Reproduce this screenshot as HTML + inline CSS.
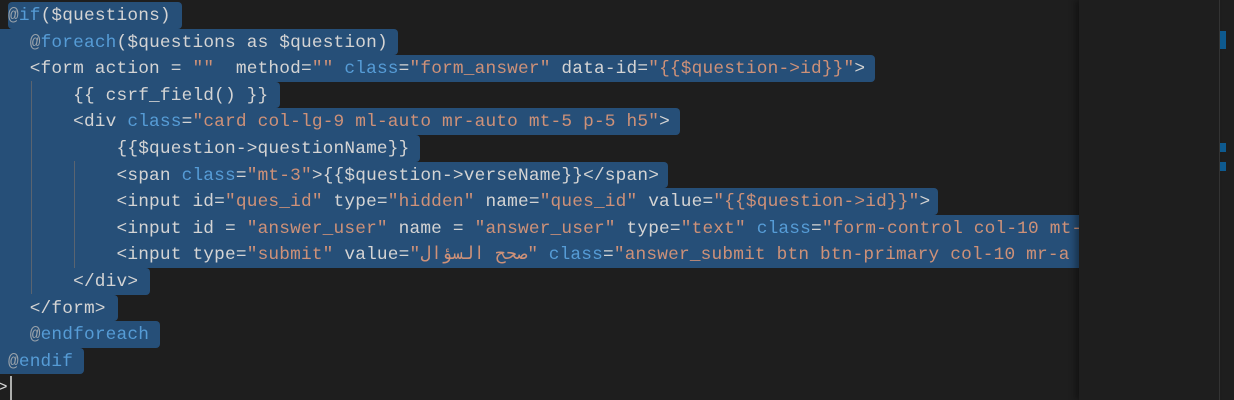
<!DOCTYPE html>
<html><head><meta charset="utf-8"><style>
html,body{margin:0;padding:0;background:#1e1e1e;width:1234px;height:400px;overflow:hidden}
.ed{position:absolute;left:0;top:0;width:1079px;height:400px;overflow:hidden;font-family:"Liberation Mono","DejaVu Sans Mono",monospace;font-size:17.8px;letter-spacing:0.18px;color:#d4d4d4}
.ln{position:absolute;left:0;height:26.6px;line-height:26.6px;white-space:pre;margin-top:1px}
.sel{position:absolute;left:0;height:26.6px;background:#264f78;border-radius:0 4px 4px 0}
.k{color:#569cd6}.s{color:#ce9178}.a{color:#9aa3ab}
.g{position:absolute;width:1px;background:#5a6470}
.mini{position:absolute;left:1079px;top:0;width:140px;height:400px;background:#1e1e1e;box-shadow:-4px 0 6px rgba(0,0,0,.35)}
.sb{position:absolute;left:1219px;top:0;width:1px;height:400px;background:#333}
.mk{position:absolute;left:1220px;width:6px;background:#0e5a8f}
</style></head><body>
<div class="ed">
<div class="sel" style="left:8px;top:2px;width:174px;border-radius:4px"></div>
<div class="sel" style="top:28.6px;width:398px"></div>
<div class="sel" style="top:55.2px;width:875px"></div>
<div class="sel" style="top:81.8px;width:280px"></div>
<div class="sel" style="top:108.4px;width:680px"></div>
<div class="sel" style="top:135px;width:420px"></div>
<div class="sel" style="top:161.6px;width:668px"></div>
<div class="sel" style="top:188.2px;width:938px"></div>
<div class="sel" style="top:214.8px;width:1079px;border-radius:0"></div>
<div class="sel" style="top:241.4px;width:1079px;border-radius:0"></div>
<div class="sel" style="top:268px;width:150px"></div>
<div class="sel" style="top:294.6px;width:118px"></div>
<div class="sel" style="top:321.2px;width:160px"></div>
<div class="sel" style="top:347.8px;width:84px"></div>
<div class="g" style="left:31px;top:81px;height:213px"></div>
<div class="g" style="left:74px;top:161px;height:107px"></div>
<div class="ln" style="top:2px;left:8px"><span class="a">@</span><span class="k">if</span>($questions)</div>
<div class="ln" style="top:28.6px;left:8px">  <span class="a">@</span><span class="k">foreach</span>($questions as $question)</div>
<div class="ln" style="top:55.2px;left:8px">  &lt;form action = <span class="s">""</span>  method=<span class="s">""</span> <span class="k">class</span>=<span class="s">"form_answer"</span> data-id=<span class="s">"{{$question-&gt;id}}"</span>&gt;</div>
<div class="ln" style="top:81.8px;left:8px">      {{ csrf_field() }}</div>
<div class="ln" style="top:108.4px;left:8px">      &lt;div <span class="k">class</span>=<span class="s">"card col-lg-9 ml-auto mr-auto mt-5 p-5 h5"</span>&gt;</div>
<div class="ln" style="top:135px;left:8px">          {{$question-&gt;questionName}}</div>
<div class="ln" style="top:161.6px;left:8px">          &lt;span <span class="k">class</span>=<span class="s">"mt-3"</span>&gt;{{$question-&gt;verseName}}&lt;/span&gt;</div>
<div class="ln" style="top:188.2px;left:8px">          &lt;input id=<span class="s">"ques_id"</span> type=<span class="s">"hidden"</span> name=<span class="s">"ques_id"</span> value=<span class="s">"{{$question-&gt;id}}"</span>&gt;</div>
<div class="ln" style="top:214.8px;left:8px">          &lt;input id = <span class="s">"answer_user"</span> name = <span class="s">"answer_user"</span> type=<span class="s">"text"</span> <span class="k">class</span>=<span class="s">"form-control col-10 mt-</span></div>
<div class="ln" style="top:241.4px;left:8px">          &lt;input type=<span class="s">"submit"</span> value=<span class="s">"<bdi>صحح السؤال</bdi>"</span> <span class="k">class</span>=<span class="s">"answer_submit btn btn-primary col-10 mr-a</span></div>
<div class="ln" style="top:268px;left:8px">      &lt;/div&gt;</div>
<div class="ln" style="top:294.6px;left:8px">  &lt;/form&gt;</div>
<div class="ln" style="top:321.2px;left:8px">  <span class="a">@</span><span class="k">endforeach</span></div>
<div class="ln" style="top:347.8px;left:8px"><span class="a">@</span><span class="k">endif</span></div>
<div class="ln" style="top:374.4px;left:-3px">&gt;</div>
<div class="g" style="left:10px;top:376px;height:24px;background:#aeafad;width:2px"></div>
</div>
<div class="mini"></div>
<div class="sb"></div>
<div class="mk" style="top:31px;height:18px"></div>
<div class="mk" style="top:143px;height:9px"></div>
<div class="mk" style="top:162px;height:9px"></div>
</body></html>
